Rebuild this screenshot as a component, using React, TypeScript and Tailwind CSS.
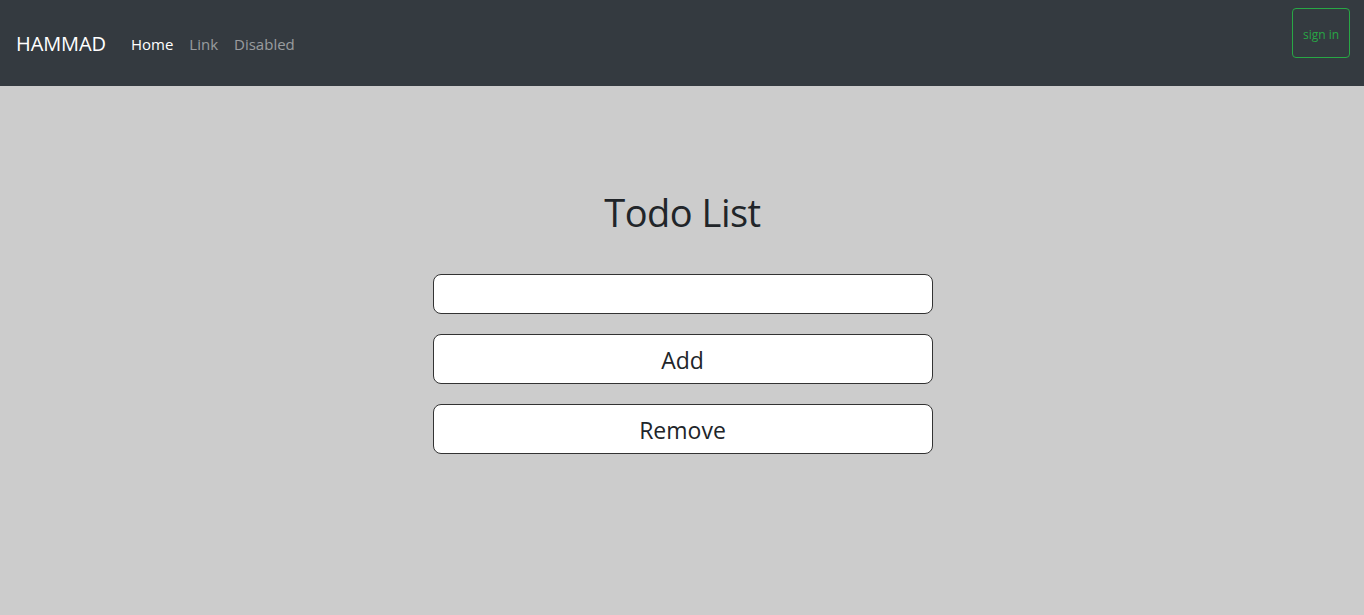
import { useState } from "react";

export default function App() {
  const [todo, setTodo] = useState("");

  return (
    <div className="min-h-screen bg-[#cccccc] font-['Open_Sans',sans-serif] text-[#212529]">
      <nav className="flex h-[86px] items-start justify-between bg-[#343a40] pl-4 pr-[14px]">
        <div className="flex h-full items-center pt-[2px]">
          <a href="#" className="mr-[25px] text-[20px] leading-none tracking-[-0.1px] text-white">
            HAMMAD
          </a>
          <ul className="flex gap-4 text-[15px] leading-none">
            <li>
              <a href="#" className="text-white">Home</a>
            </li>
            <li>
              <a href="#" className="text-white/50">Link</a>
            </li>
            <li>
              <span className="text-white/50">Disabled</span>
            </li>
          </ul>
        </div>
        <button className="mt-2 h-[50px] w-[58px] rounded border border-[#28a745] pt-[3px] text-[12px] text-[#28a745]">
          sign in
        </button>
      </nav>

      <main className="flex flex-col items-center pl-px pt-[102px]">
        <h1 className="text-[38px] leading-[48px] tracking-[-0.5px]">Todo List</h1>
        <input
          value={todo}
          onChange={(e) => setTodo(e.target.value)}
          className="mt-[38px] h-10 w-[500px] rounded-lg border border-[#333] bg-white px-3 outline-none"
        />
        <button className="mt-5 h-[50px] w-[500px] rounded-lg border border-[#333] bg-white pt-[2px] text-[23px] text-[#212529]">
          Add
        </button>
        <button className="mt-5 h-[50px] w-[500px] rounded-lg border border-[#333] bg-white pt-[2px] text-[23px] text-[#212529]">
          Remove
        </button>
      </main>
    </div>
  );
}
